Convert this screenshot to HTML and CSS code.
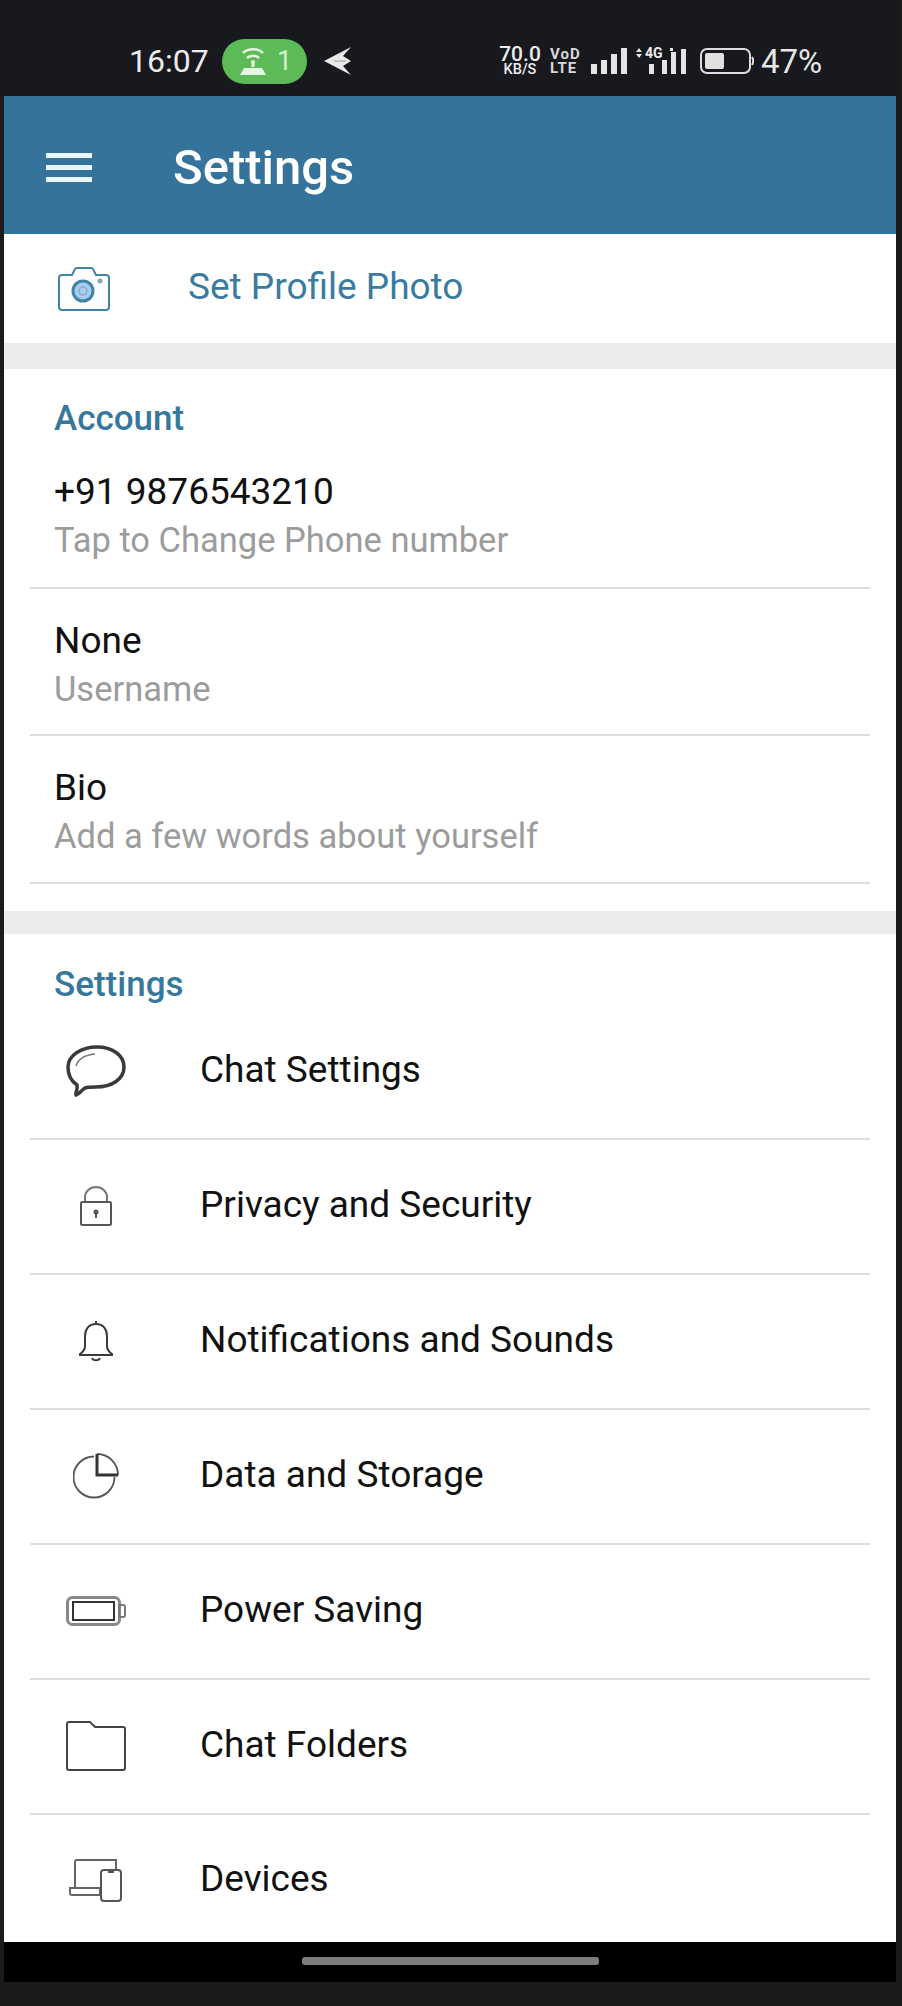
FILE: index.html
```html
<!DOCTYPE html>
<html lang="en">
<head>
<meta charset="utf-8">
<title>Settings</title>
<link rel="stylesheet" href="styles.css">
</head>
<body>
<div class="screen">
  <div class="status">
    <span class="time">16:07</span>
    <span class="pill">
      <svg class="pill-icon" width="26" height="30" viewBox="0 0 26 30" fill="none" stroke="#e6f5e2" stroke-width="2.6"><path d="M3 7c5-5 15-5 20 0"/><path d="M7 12c3-3 9-3 12 0"/><circle cx="13" cy="16" r="2" fill="#e6f5e2" stroke="none"/><rect x="11.500" y="16" width="3" height="5" fill="#e6f5e2" stroke="none"/><path d="M0 29l4-7h18l4 7z" fill="#e6f5e2" stroke="none"/></svg>
      <span class="pill-num">1</span>
    </span>
    <svg class="send" width="28" height="30" viewBox="0 0 28 30"><path d="M0 15L27 1 19 10l8 5-8 5 8 9z" fill="#e8e8e8"/><path d="M10 15h12" stroke="#9a9a9a" stroke-width="1"/></svg>
    <span class="status-right">
      <span class="net"><span class="net-top">70.0</span><span class="net-bot">KB/S</span></span>
      <span class="vod"><span>VoD</span><span>LTE</span></span>
      <svg class="sig" width="36" height="26" viewBox="0 0 36 26" fill="#e4e4e4"><rect x="0" y="16" width="6" height="10"/><rect x="10" y="12" width="6" height="14"/><rect x="20" y="6" width="6" height="20"/><rect x="30" y="0" width="6" height="26"/></svg>
      <span class="fourg">
        <svg width="50" height="26" viewBox="0 0 50 26" fill="#e4e4e4"><path d="M3 0l3 4H0zM3 10l3-4H0z"/><rect x="13" y="16" width="5" height="10"/><rect x="26" y="12" width="5" height="14"/><rect x="35" y="4" width="5" height="22"/><rect x="45" y="1" width="5" height="25"/><rect x="34" y="0" width="3" height="3"/></svg>
        <span class="fourg-text">4G</span>
      </span>
      <svg class="batt" width="54" height="26" viewBox="0 0 54 26" fill="none"><rect x="1" y="1" width="49" height="24" rx="6" stroke="#dcdcdc" stroke-width="2"/><rect x="5" y="5" width="19" height="16" rx="2" fill="#e0e0e0"/><path d="M52 9c1.500 2 1.500 6 0 8" stroke="#dcdcdc" stroke-width="2"/></svg>
      <span class="pct">47%</span>
    </span>
  </div>

  <header class="appbar">
    <span class="burger"><i></i><i></i><i></i></span>
    <h1 class="title">Settings</h1>
  </header>

  <div class="photo-row">
    <svg class="cam" width="52" height="45" viewBox="0 0 52 45" fill="none" stroke="#3f83ab" stroke-width="2"><path d="M4 9h10l3-6a2 2 0 0 1 2-1h14a2 2 0 0 1 2 1l3 6h10a3 3 0 0 1 3 3v29a3 3 0 0 1-3 3H4a3 3 0 0 1-3-3V12a3 3 0 0 1 3-3z"/><circle cx="25" cy="25" r="10" fill="#a9cdea" stroke="#3f83ab" stroke-width="3"/><circle cx="25" cy="25" r="4" stroke="#7fb0d6" stroke-width="1.500"/><circle cx="42" cy="15" r="2.500" fill="#7fa9c4" stroke="none"/></svg>
    <span class="photo-text">Set Profile Photo</span>
  </div>

  <div class="band band-first"></div>

  <section class="group">
    <h2 class="group-title">Account</h2>
    <div class="info-row"><div class="info-main">+91 9876543210</div><div class="info-sub">Tap to Change Phone number</div></div>
    <div class="info-row"><div class="info-main">None</div><div class="info-sub">Username</div></div>
    <div class="info-row"><div class="info-main">Bio</div><div class="info-sub">Add a few words about yourself</div></div>
  </section>

  <div class="band band-second"></div>

  <section class="group group-settings">
    <h2 class="group-title">Settings</h2>
    <div class="set-row">
      <span class="set-icon"><svg width="60" height="52" viewBox="0 0 60 52" fill="none" stroke="#3a3a3a" stroke-width="3.500"><path d="M31 2c15 0 27 8 27 20S46 42 30 42c-4 0-8 0-11 1-3 2-6 6-9 7-1-1 2-6 1-10C5 36 2 29 2 22 2 10 16 2 31 2z"/><path d="M10 21c2-7 9-11 19-12" stroke-width="1.500" stroke="#777"/></svg></span>
      <span class="set-label">Chat Settings</span>
    </div>
    <div class="set-row">
      <span class="set-icon"><svg width="32" height="40" viewBox="0 0 32 40" fill="none" stroke="#555" stroke-width="2"><path d="M5 16V11a11 10 0 0 1 22 0v5" stroke="#777"/><rect x="1" y="16" width="30" height="23" rx="1.500"/><circle cx="16" cy="26" r="2.500" fill="#555" stroke="none"/><path d="M16 27v5"/></svg></span>
      <span class="set-label">Privacy and Security</span>
    </div>
    <div class="set-row">
      <span class="set-icon"><svg width="36" height="42" viewBox="0 0 36 42" fill="none" stroke="#3a3a3a" stroke-width="2"><path d="M18 4c-7 0-11 5-11 12v10c0 3-2 6-5 8v1h32v-1c-3-2-5-5-5-8V16c0-7-4-12-11-12z"/><path d="M18 1v3"/><path d="M14 38c1 3 7 3 8 0"/></svg></span>
      <span class="set-label">Notifications and Sounds</span>
    </div>
    <div class="set-row">
      <span class="set-icon"><svg width="46" height="46" viewBox="0 0 46 46" fill="none" stroke="#555" stroke-width="1.800"><path d="M21 3.500A20.500 20.500 0 1 0 41.500 24"/><path d="M24 1a21 21 0 0 1 21 21"/><path d="M24 1v21h21" stroke="#333" stroke-width="3"/></svg></span>
      <span class="set-label">Data and Storage</span>
    </div>
    <div class="set-row">
      <span class="set-icon"><svg width="60" height="30" viewBox="0 0 60 30" fill="none"><rect x="1.500" y="1.500" width="52" height="27" rx="5" stroke="#888" stroke-width="3"/><rect x="7" y="6" width="41" height="18" stroke="#333" stroke-width="2"/><rect x="53" y="9" width="6" height="12" rx="2" stroke="#777" stroke-width="2"/></svg></span>
      <span class="set-label">Power Saving</span>
    </div>
    <div class="set-row">
      <span class="set-icon"><svg width="60" height="50" viewBox="0 0 60 50" fill="none" stroke="#444" stroke-width="2"><path d="M3 1h21l5 5h28a2 2 0 0 1 2 2v39a2 2 0 0 1-2 2H3a2 2 0 0 1-2-2V3a2 2 0 0 1 2-2z"/></svg></span>
      <span class="set-label">Chat Folders</span>
    </div>
    <div class="set-row set-row-last">
      <span class="set-icon"><svg width="54" height="44" viewBox="0 0 54 44" fill="none" stroke="#666" stroke-width="2"><path d="M6 30V4a2 2 0 0 1 2-2h39v9"/><path d="M1 30h30v7H3a2 2 0 0 1-2-2z"/><rect x="32" y="12" width="20" height="31" rx="3" stroke="#555"/><path d="M39 14h6" stroke="#555"/></svg></span>
      <span class="set-label">Devices</span>
    </div>
  </section>

  <div class="navbar"><span class="home"></span></div>
</div>
</body>
</html>
```

FILE: styles.css
```css
* { box-sizing: border-box; }
html, body { margin: 0; padding: 0; }
body {
  background: #1b1b1b;
  font-family: Roboto, "Liberation Sans", sans-serif;
  height: 2006px;
  overflow: hidden;
}
.screen { margin-left: 4px; width: 892px; background: #fff; }

/* status bar */
.status {
  margin-left: -4px;
  width: 900px;
  height: 96px;
  background: #17191e;
  display: flex;
  align-items: center;
  padding: 26px 0 0 129px;
  color: #ececec;
}
.time { font-size: 32px; width: 93px; line-height: 1; }
.pill {
  width: 85px;
  height: 45px;
  border-radius: 23px;
  background: #5dbb57;
  display: flex;
  align-items: center;
  padding-left: 18px;
  gap: 11px;
}
.pill-num { font-size: 27px; color: #d6f0d0; line-height: 1; }
.send { margin-left: 17px; }
.status-right { margin-left: 147px; display: flex; align-items: center; }
.net { display: flex; flex-direction: column; align-items: center; width: 42px; font-weight: 500; }
.net-top { font-size: 21px; line-height: 17px; }
.net-bot { font-size: 14.500px; line-height: 13px; }
.vod {
  display: flex;
  flex-direction: column;
  margin-left: 9px;
  width: 32px;
  font-size: 15px;
  line-height: 14px;
  font-weight: 700;
  letter-spacing: 1px;
  color: #d8d8d8;
}
.sig { margin-left: 9px; }
.fourg { position: relative; display: flex; margin-left: 9px; width: 50px; }
.fourg-text {
  position: absolute;
  left: 9px;
  top: -2px;
  font-size: 14px;
  line-height: 14px;
  font-weight: 700;
}
.batt { margin-left: 14px; }
.pct { margin-left: 7px; font-size: 33px; line-height: 1; color: #e6e6e6; }

/* app bar */
.appbar {
  height: 138px;
  background: #35739b;
  display: flex;
  align-items: center;
  padding: 4px 0 0 42px;
  color: #fff;
}
.burger { width: 46px; display: flex; flex-direction: column; gap: 7px; }
.burger i { display: block; height: 5px; background: #e6f6fa; }
.title { margin: 0 0 0 81px; font-size: 49px; font-weight: 500; line-height: 1; }

/* set profile photo */
.photo-row {
  height: 109px;
  display: flex;
  align-items: center;
  padding-left: 54px;
}
.photo-text { margin-left: 78px; margin-top: -5px; font-size: 37px; color: #3a7c9f; line-height: 1; }

.band { background: #ececec; }
.band-first { height: 26px; }
.band-second { height: 23px; margin-top: 27px; }

/* groups */
.group-title {
  margin: 0;
  height: 72px;
  padding: 33px 0 0 50px;
  font-size: 35px;
  line-height: 34px;
  font-weight: 500;
  color: #35789c;
}
.group-settings .group-title { height: 71px; padding-top: 34px; }
.info-row {
  margin: 0 26px;
  height: 147.500px;
  border-bottom: 2px solid #dedede;
  padding: 31px 0 0 24px;
}
.group-title + .info-row { padding-top: 30px; }
.info-main { font-size: 37px; line-height: 42px; color: #111; }
.info-sub { margin-top: 7px; font-size: 34.500px; line-height: 40px; color: #9c9c9c; }

.set-row {
  margin: 0 26px;
  height: 135px;
  border-bottom: 2px solid #dedede;
  display: flex;
  align-items: center;
}
.set-row-last { border-bottom: 0; height: 127px; padding-top: 4px; }
.set-icon {
  width: 132px;
  display: flex;
  justify-content: center;
  flex: none;
}
.set-label { margin-left: 38px; margin-top: -4px; font-size: 37px; line-height: 1; color: #111; }

/* nav bar */
.navbar {
  height: 40px;
  background: #000;
  display: flex;
  justify-content: center;
  padding-top: 15px;
}
.home { width: 297px; height: 8px; border-radius: 3px; background: #7d7d7d; }
```
